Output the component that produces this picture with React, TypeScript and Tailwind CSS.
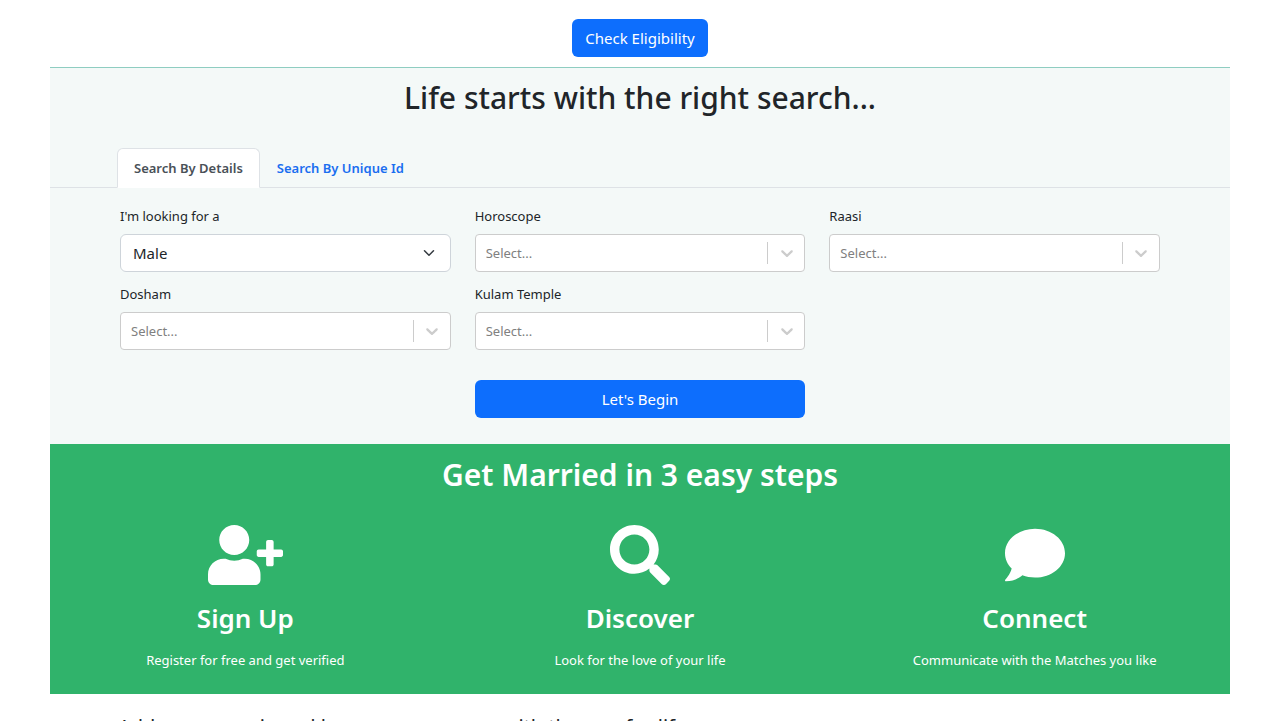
import { useState } from "react";
import type { ReactNode } from "react";
import { FaComment, FaSearch, FaUserPlus } from "react-icons/fa";

type SelectFieldProps = { id: string; label: string; options: string[] };

function SelectField({ id, label, options }: SelectFieldProps) {
  return (
    <div>
      <label htmlFor={id} className="block pb-2 text-[13px] leading-5">
        {label}
      </label>
      <div className="relative">
        <select
          id={id}
          defaultValue=""
          className="block h-[38px] w-full appearance-none rounded border border-[#cccccc] bg-white pt-0.5 pr-12 pl-[10px] text-[13px] text-[#808080]"
        >
          <option value="">Select...</option>
          {options.map((option) => (
            <option key={option}>{option}</option>
          ))}
        </select>
        <span className="pointer-events-none absolute inset-y-2 right-0 flex w-[38px] items-center justify-center border-l border-[#cccccc] text-[#cccccc]">
          <svg width="20" height="20" viewBox="0 0 20 20" fill="currentColor" aria-hidden="true">
            <path d="M4.516 7.548c0.436-0.446 1.043-0.481 1.576 0l3.908 3.747 3.908-3.747c0.533-0.481 1.141-0.446 1.574 0 0.436 0.445 0.408 1.197 0 1.615-0.406 0.418-4.695 4.502-4.695 4.502-0.217 0.223-0.502 0.335-0.787 0.335s-0.57-0.112-0.789-0.335c0 0-4.287-4.084-4.695-4.502s-0.436-1.17 0-1.615z" />
          </svg>
        </span>
      </div>
    </div>
  );
}

function Step({ icon, title, text }: { icon: ReactNode; title: string; text: string }) {
  return (
    <div className="flex flex-col items-center text-center">
      {icon}
      <h3 className="mt-[15px] text-[26px] leading-9 font-semibold">{title}</h3>
      <p className="mt-3.5 text-[13px] leading-5">{text}</p>
    </div>
  );
}

export default function App() {
  const [tab, setTab] = useState("details");
  const tabClass = (name: string) =>
    tab === name
      ? "h-10 -mb-px rounded-t-md border border-[#dee2e6] border-b-white bg-white px-4 pt-0.5 text-[#495057]"
      : "h-10 -mb-px rounded-t-md border border-transparent px-4 pt-0.5 text-[#1a6ef0]";

  return (
    <main className="h-screen overflow-hidden bg-white px-[50px] font-['Noto_Sans',sans-serif] text-[#212529]">
      <div className="flex justify-center pt-[19px] pb-[10px]">
        <button type="button" className="h-[38px] rounded-md bg-[#0d6efd] px-[13px] text-[15px] text-white">
          Check Eligibility
        </button>
      </div>

      <section className="border-t border-t-[#8fcdc1] bg-[#f4f9f8] pb-[26px]">
        <h2 className="pt-2 text-center text-[30px] leading-[44px] font-medium">
          Life starts with the right search...
        </h2>
        <div role="tablist" className="mt-7 flex border-b border-[#dee2e6] px-[67px] text-[13px] font-semibold">
          <button
            type="button"
            role="tab"
            aria-selected={tab === "details"}
            onClick={() => setTab("details")}
            className={tabClass("details")}
          >
            Search By Details
          </button>
          <button
            type="button"
            role="tab"
            aria-selected={tab === "id"}
            onClick={() => setTab("id")}
            className={tabClass("id")}
          >
            Search By Unique Id
          </button>
        </div>

        <form className="px-[70px] pt-[18px]" onSubmit={(event) => event.preventDefault()}>
          <div className="grid grid-cols-3 gap-x-6 gap-y-3">
            <div>
              <label htmlFor="gender" className="block pb-2 text-[13px] leading-5">
                I'm looking for a
              </label>
              <div className="relative">
                <select
                  id="gender"
                  className="block h-[38px] w-full appearance-none rounded-md border border-[#ced4da] bg-white pr-9 pl-3 text-[15px]"
                >
                  <option>Male</option>
                  <option>Female</option>
                </select>
                <svg
                  className="pointer-events-none absolute top-[13px] right-4"
                  width="12"
                  height="12"
                  viewBox="0 0 16 16"
                  fill="none"
                  stroke="#343a40"
                  strokeWidth="2"
                  strokeLinecap="round"
                  strokeLinejoin="round"
                  aria-hidden="true"
                >
                  <path d="m2 5 6 6 6-6" />
                </svg>
              </div>
            </div>
            <SelectField id="horoscope" label="Horoscope" options={["Ashwini", "Bharani"]} />
            <SelectField id="raasi" label="Raasi" options={["Mesham", "Rishabam"]} />
            <SelectField id="dosham" label="Dosham" options={["Yes", "No"]} />
            <SelectField id="temple" label="Kulam Temple" options={["Other"]} />
          </div>
          <div className="mt-[30px] grid grid-cols-3 gap-x-6">
            <button type="submit" className="col-start-2 h-[38px] rounded-md bg-[#0d6efd] text-[15px] text-white">
              Let's Begin
            </button>
          </div>
        </form>
      </section>

      <section className="bg-[#30b36b] pb-6 text-white">
        <h2 className="pt-[9px] text-center text-[30px] leading-[44px] font-semibold">Get Married in 3 easy steps</h2>
        <div className="mt-7 grid grid-cols-3 gap-x-1">
          <Step
            icon={<FaUserPlus className="h-[60px] w-[75px]" aria-hidden="true" />}
            title="Sign Up"
            text="Register for free and get verified"
          />
          <Step
            icon={<FaSearch className="size-[60px]" aria-hidden="true" />}
            title="Discover"
            text="Look for the love of your life"
          />
          <Step
            icon={<FaComment className="size-[60px]" aria-hidden="true" />}
            title="Connect"
            text="Communicate with the Matches you like"
          />
        </div>
      </section>

      <p className="px-[68px] pt-[18px] text-xl leading-[30px]">
        Add some magic and become a new one with the one for life
      </p>
    </main>
  );
}
